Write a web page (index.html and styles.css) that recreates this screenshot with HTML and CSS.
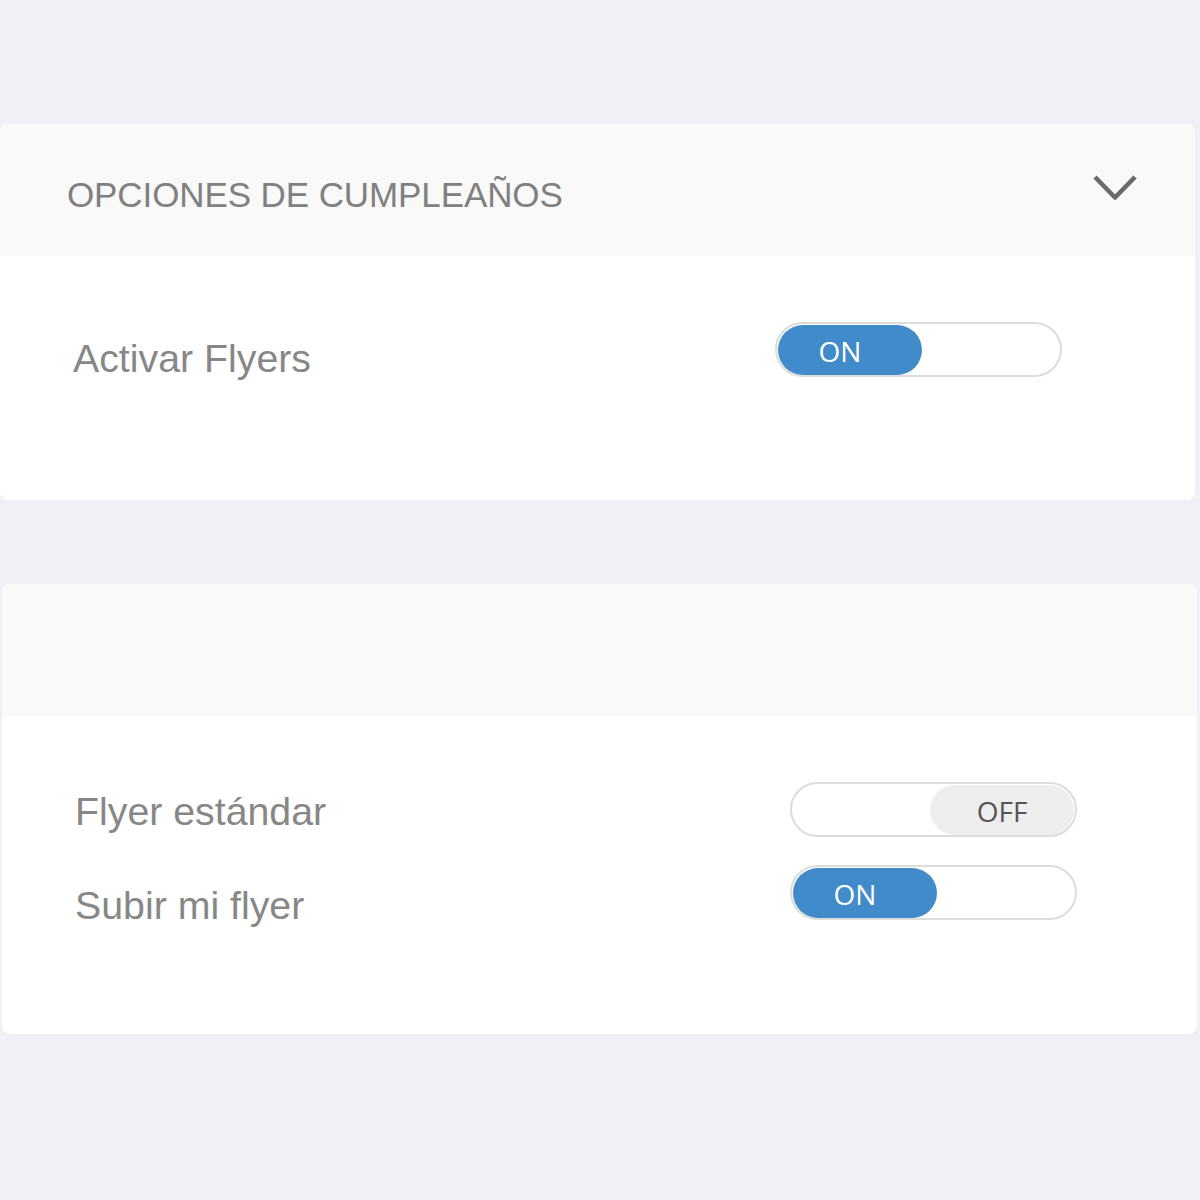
FILE: index.html
```html
<!DOCTYPE html>
<html lang="es">
<head>
<meta charset="utf-8">
<title>Opciones de cumpleaños</title>
<link rel="stylesheet" href="styles.css">
</head>
<body>
<div class="page">
  <section class="card card-first">
    <div class="card-header">
      <h2 class="card-title">OPCIONES DE CUMPLEAÑOS</h2>
      <svg class="chevron" width="44" height="26" viewBox="0 0 44 26" aria-hidden="true">
        <polyline points="2,2 22,22.5 42,2" fill="none" stroke="#6b6b6b" stroke-width="4.6" stroke-linejoin="round"/>
      </svg>
    </div>
    <div class="card-body body-first">
      <div class="labels">
        <div class="label">Activar Flyers</div>
      </div>
      <div class="switches">
        <div class="switch"><span class="knob on">ON</span></div>
      </div>
    </div>
  </section>

  <section class="card card-second">
    <div class="card-header"></div>
    <div class="card-body body-second">
      <div class="labels">
        <div class="label">Flyer estándar</div>
        <div class="label">Subir mi flyer</div>
      </div>
      <div class="switches">
        <div class="switch switch-off"><span class="knob off">OFF</span></div>
        <div class="switch"><span class="knob on">ON</span></div>
      </div>
    </div>
  </section>
</div>
</body>
</html>
```
FILE: styles.css
```css
html, body {
  margin: 0;
  padding: 0;
  background: #f0f1f6;
}

body {
  font-family: "Liberation Sans", Arial, sans-serif;
  width: 1200px;
  height: 1200px;
  overflow: hidden;
}

.page {
  padding-top: 124px;
  display: flex;
  flex-direction: column;
  gap: 84px;
}

.card {
  width: 1195px;
  border-radius: 8px;
  overflow: hidden;
  background: #ffffff;
}

.card-first {
  margin-left: 0;
}

.card-second {
  margin-left: 2px;
}

.card-header {
  height: 132px;
  background: #f9f9f9;
  display: flex;
  align-items: center;
  justify-content: space-between;
  box-sizing: border-box;
}

.card-title {
  margin: 0;
  padding: 10px 0 0 67px;
  font-size: 35px;
  font-weight: 400;
  color: #808080;
  letter-spacing: -0.1px;
}

.chevron {
  display: block;
  margin: -4px 58px 0 0;
}

.card-body {
  display: flex;
  box-sizing: border-box;
}

.body-first {
  height: 244px;
  padding: 66px 0 0 73px;
}

.body-second {
  height: 318px;
  padding: 66px 0 0 73px;
}

.labels {
  display: flex;
  flex-direction: column;
}

.body-first .labels {
  width: 702px;
  padding-top: 14px;
}

.body-second .labels {
  width: 715px;
  padding-top: 7px;
  gap: 50px;
}

.label {
  font-size: 39.3px;
  line-height: 44px;
  color: #878787;
}

.switches {
  display: flex;
  flex-direction: column;
  gap: 28px;
}

.switch {
  width: 287px;
  height: 55px;
  box-sizing: border-box;
  border: 2px solid #dcdcdc;
  border-radius: 28px;
  background: #ffffff;
  display: flex;
  align-items: center;
  padding: 0 1px;
}

.switch-off {
  justify-content: flex-end;
}

.knob {
  width: 144px;
  height: 50px;
  border-radius: 25px;
  display: flex;
  align-items: center;
  justify-content: center;
  font-family: "Open Sans", "Liberation Sans", sans-serif;
  font-size: 28px;
  box-sizing: border-box;
}

.knob.on {
  background: #428bca;
  color: #ffffff;
  padding-right: 20px;
  padding-top: 3px;
}

.knob.off {
  background: #eeeeee;
  color: #555555;
  padding-top: 2px;
}
```
